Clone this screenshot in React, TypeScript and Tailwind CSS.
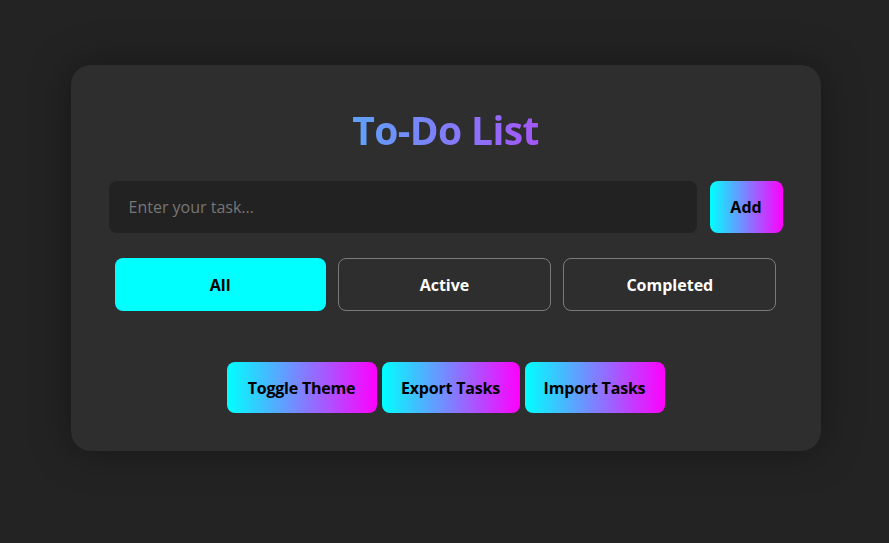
import { useState } from "react";

const filters = ["All", "Active", "Completed"];

const actions = [
  { label: "Toggle Theme", w: "w-[150px]" },
  { label: "Export Tasks", w: "w-[138px]" },
  { label: "Import Tasks", w: "w-[140px]" },
];

export default function App() {
  const [filter, setFilter] = useState("All");
  const [task, setTask] = useState("");

  return (
    <div
      className="min-h-[543px] w-full bg-[#232323] flex justify-center pt-[65px] pl-[2px]"
      style={{ fontFamily: '"Open Sans", "Noto Sans", sans-serif' }}
    >
      <div className="w-[750px] h-[386px] rounded-[20px] bg-[#2e2e2e] px-[38px] pt-[38px] shadow-[0_0_40px_rgba(0,0,0,0.35)]">
        <h1 className="mt-[3px] mb-[27px] text-center text-[39px] leading-[48px] font-bold tracking-[-0.6px]">
          <span className="bg-[linear-gradient(to_right,#5ea2fb,#a457f7)] bg-clip-text text-transparent">
            To-Do List
          </span>
        </h1>

        <div className="flex gap-[13px]">
          <input
            value={task}
            onChange={(e) => setTask(e.target.value)}
            placeholder="Enter your task..."
            className="flex-1 h-[52px] rounded-lg bg-[#222222] px-5 text-[16px] text-white placeholder:text-[#767676] outline-none"
          />
          <button className="w-[73px] h-[52px] rounded-lg bg-[linear-gradient(to_right,#00ffff,#ff00ff)] text-[16px] font-bold text-black">
            Add
          </button>
        </div>

        <div className="flex mt-[25px]">
          {filters.map((f) => (
            <button
              key={f}
              onClick={() => setFilter(f)}
              className={`flex-1 mx-[6px] h-[53px] rounded-lg text-[16px] font-bold ${
                filter === f
                  ? "bg-[#00ffff] text-black"
                  : "border border-[#7a7a7a] text-white"
              }`}
            >
              {f}
            </button>
          ))}
        </div>

        <div className="flex justify-center gap-[5px] mt-[51px]">
          {actions.map((a) => (
            <button
              key={a.label}
              className={`${a.w} h-[51px] rounded-lg bg-[linear-gradient(to_right,#00ffff,#ff00ff)] text-[16px] font-bold text-black tracking-[-0.2px]`}
            >
              {a.label}
            </button>
          ))}
        </div>
      </div>
    </div>
  );
}
